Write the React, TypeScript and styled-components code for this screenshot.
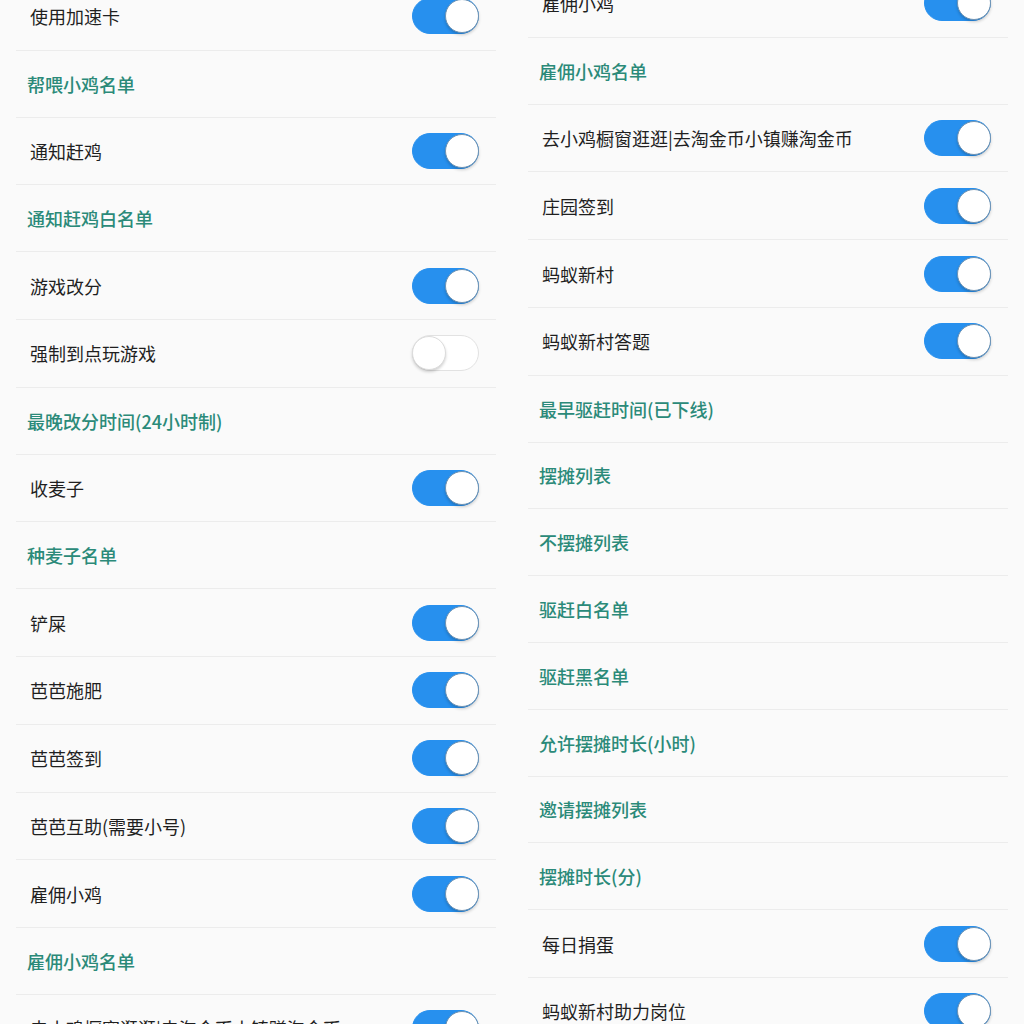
import React from 'react';
import styled, { createGlobalStyle } from 'styled-components';

const GlobalStyle = createGlobalStyle`
    html, body {
        margin: 0;
        padding: 0;
        background: #fafafa;
        overflow: hidden;
    }
    body {
        font-family: "Noto Sans CJK SC", "Noto Sans", sans-serif;
    }
`;

const Page = styled.div`
    width: 1024px;
    height: 1024px;
    overflow: hidden;
    display: grid;
    grid-template-columns: 480px 480px;
    column-gap: 32px;
    padding: 0 16px;
    box-sizing: border-box;
    background: #fafafa;
`;

const Column = styled.div<{ $offset: number }>`
    display: flex;
    flex-direction: column;
    margin-top: ${(p) => p.$offset}px;
`;

const Row = styled.div`
    height: 67.8px;
    box-sizing: border-box;
    display: flex;
    align-items: center;
    padding: 0 17px 0 14px;
    border-bottom: 1px solid #ececec;
    flex-shrink: 0;
`;

const Label = styled.span`
    flex: 1;
    font-size: 18px;
    color: #1f1f1f;
    white-space: nowrap;
`;

const Header = styled.div`
    height: 66.8px;
    box-sizing: border-box;
    display: flex;
    align-items: center;
    padding: 0 11px;
    border-bottom: 1px solid #ececec;
    font-size: 18px;
    font-weight: 500;
    color: #2b8a79;
    flex-shrink: 0;
`;

const Track = styled.div<{ $on: boolean }>`
    position: relative;
    width: 67px;
    height: 36px;
    border-radius: 18px;
    box-sizing: border-box;
    background: ${(p) => (p.$on ? '#2790ee' : '#fff')};
    border: 1px solid ${(p) => (p.$on ? '#2790ee' : '#e2e2e2')};
`;

const Knob = styled.div<{ $on: boolean }>`
    position: absolute;
    top: 0;
    ${(p) => (p.$on ? 'right: -1px;' : 'left: -1px;')}
    width: 34px;
    height: 34px;
    border-radius: 50%;
    background: #fff;
    box-sizing: border-box;
    border: 1px solid ${(p) => (p.$on ? '#6f93b3' : '#dcdcdc')};
    box-shadow: 0 2px 3px rgba(0, 0, 0, 0.18);
`;

type Item = { t: 'h'; text: string } | { t: 's'; text: string; on?: boolean };

const Switch = ({ on }: { on: boolean }) => (
    <Track $on={on}>
        <Knob $on={on} />
    </Track>
);

const left: Item[] = [
    { t: 's', text: '使用加速卡' },
    { t: 'h', text: '帮喂小鸡名单' },
    { t: 's', text: '通知赶鸡' },
    { t: 'h', text: '通知赶鸡白名单' },
    { t: 's', text: '游戏改分' },
    { t: 's', text: '强制到点玩游戏', on: false },
    { t: 'h', text: '最晚改分时间(24小时制)' },
    { t: 's', text: '收麦子' },
    { t: 'h', text: '种麦子名单' },
    { t: 's', text: '铲屎' },
    { t: 's', text: '芭芭施肥' },
    { t: 's', text: '芭芭签到' },
    { t: 's', text: '芭芭互助(需要小号)' },
    { t: 's', text: '雇佣小鸡' },
    { t: 'h', text: '雇佣小鸡名单' },
    { t: 's', text: '去小鸡橱窗逛逛|去淘金币小镇赚淘金币' },
];

const right: Item[] = [
    { t: 's', text: '雇佣小鸡' },
    { t: 'h', text: '雇佣小鸡名单' },
    { t: 's', text: '去小鸡橱窗逛逛|去淘金币小镇赚淘金币' },
    { t: 's', text: '庄园签到' },
    { t: 's', text: '蚂蚁新村' },
    { t: 's', text: '蚂蚁新村答题' },
    { t: 'h', text: '最早驱赶时间(已下线)' },
    { t: 'h', text: '摆摊列表' },
    { t: 'h', text: '不摆摊列表' },
    { t: 'h', text: '驱赶白名单' },
    { t: 'h', text: '驱赶黑名单' },
    { t: 'h', text: '允许摆摊时长(小时)' },
    { t: 'h', text: '邀请摆摊列表' },
    { t: 'h', text: '摆摊时长(分)' },
    { t: 's', text: '每日捐蛋' },
    { t: 's', text: '蚂蚁新村助力岗位' },
];

const List = ({ items, offset }: { items: Item[]; offset: number }) => (
    <Column $offset={offset}>
        {items.map((it, i) =>
            it.t === 'h' ? (
                <Header key={i}>{it.text}</Header>
            ) : (
                <Row key={i}>
                    <Label>{it.text}</Label>
                    <Switch on={it.on !== false} />
                </Row>
            )
        )}
    </Column>
);

export default function App() {
    return (
        <>
            <GlobalStyle />
            <Page>
                <List items={left} offset={-17} />
                <List items={right} offset={-30} />
            </Page>
        </>
    );
}
